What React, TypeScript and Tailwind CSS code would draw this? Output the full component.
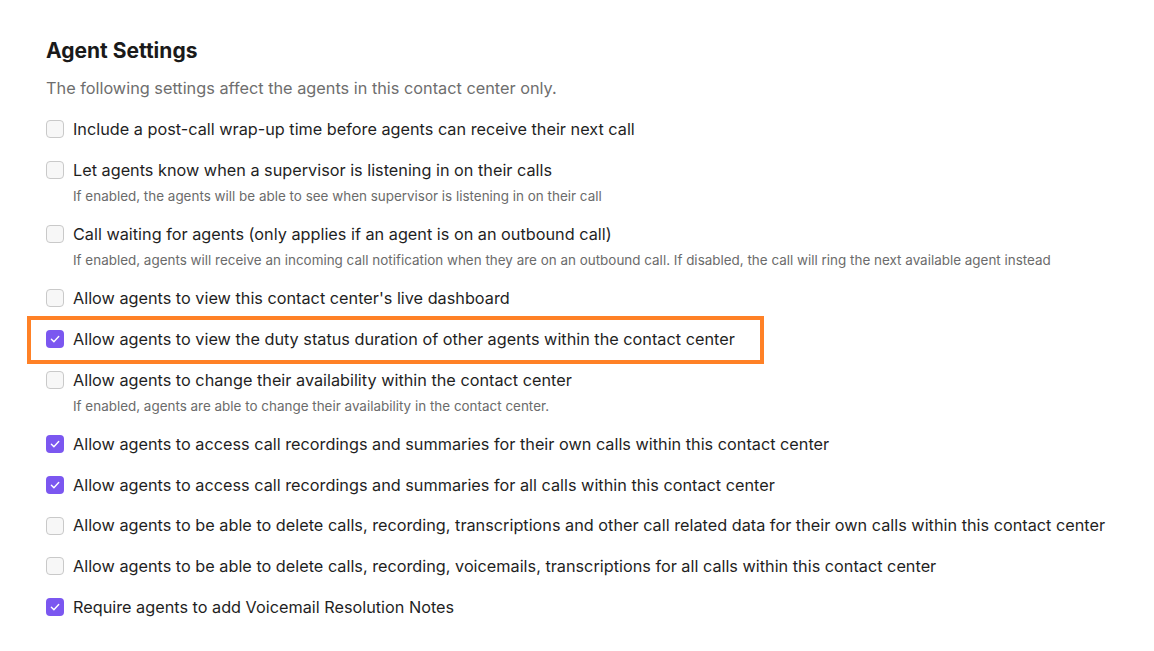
import React from "react";

type Item = { label: string; hint?: string; checked?: boolean; highlight?: boolean };

const items: Item[] = [
  { label: "Include a post-call wrap-up time before agents can receive their next call" },
  {
    label: "Let agents know when a supervisor is listening in on their calls",
    hint: "If enabled, the agents will be able to see when supervisor is listening in on their call",
  },
  {
    label: "Call waiting for agents (only applies if an agent is on an outbound call)",
    hint: "If enabled, agents will receive an incoming call notification when they are on an outbound call. If disabled, the call will ring the next available agent instead",
  },
  { label: "Allow agents to view this contact center's live dashboard" },
  {
    label: "Allow agents to view the duty status duration of other agents within the contact center",
    checked: true,
    highlight: true,
  },
  {
    label: "Allow agents to change their availability within the contact center",
    hint: "If enabled, agents are able to change their availability in the contact center.",
  },
  { label: "Allow agents to access call recordings and summaries for their own calls within this contact center", checked: true },
  { label: "Allow agents to access call recordings and summaries for all calls within this contact center", checked: true },
  {
    label:
      "Allow agents to be able to delete calls, recording, transcriptions and other call related data for their own calls within this contact center",
  },
  { label: "Allow agents to be able to delete calls, recording, voicemails, transcriptions for all calls within this contact center" },
  { label: "Require agents to add Voicemail Resolution Notes", checked: true },
];

function Checkbox({ checked }: { checked?: boolean }) {
  if (checked) {
    return (
      <span className="flex h-[18px] w-[18px] shrink-0 items-center justify-center rounded-[4px] bg-[#7b57f0]">
        <svg width="12" height="12" viewBox="0 0 12 12" fill="none">
          <path d="M2.4 6.2 4.9 8.7 9.7 3.6" stroke="white" strokeWidth="1.4" strokeLinecap="round" strokeLinejoin="round" />
        </svg>
      </span>
    );
  }
  return <span className="h-[18px] w-[18px] shrink-0 rounded-[4px] border border-[#c9c9c9] bg-[#f7f7f7]" />;
}

function SettingRow({ item }: { item: Item }) {
  return (
    <div className="relative">
      {item.highlight && (
        <div className="pointer-events-none absolute -left-[19px] -top-[11px] h-[48px] w-[737px] border-[4px] border-[#ff8126]" />
      )}
      <div className="flex h-6 items-center gap-[9px]">
        <Checkbox checked={item.checked} />
        <span className="text-[16.25px] text-[#1f1f1f] whitespace-nowrap">{item.label}</span>
      </div>
      {item.hint && (
        <p className="mt-[5.4px] pl-[27px] text-[13.45px] leading-[18px] text-[#6b6b6b] whitespace-nowrap">{item.hint}</p>
      )}
    </div>
  );
}

export default function App() {
  return (
    <div className="min-h-[651px] w-full bg-white px-[46px] pt-[38px] font-['Inter','Noto_Sans',sans-serif] antialiased">
      <h1 className="text-[21px] font-bold leading-[26px] text-[#1a1a1a]">Agent Settings</h1>
      <p className="mt-[12px] text-[16.3px] leading-6 text-[#6e6e6e]">
        The following settings affect the agents in this contact center only.
      </p>
      <div className="mt-[17px] flex flex-col gap-[16.8px]">
        {items.map((item, i) => (
          <SettingRow key={i} item={item} />
        ))}
      </div>
    </div>
  );
}
